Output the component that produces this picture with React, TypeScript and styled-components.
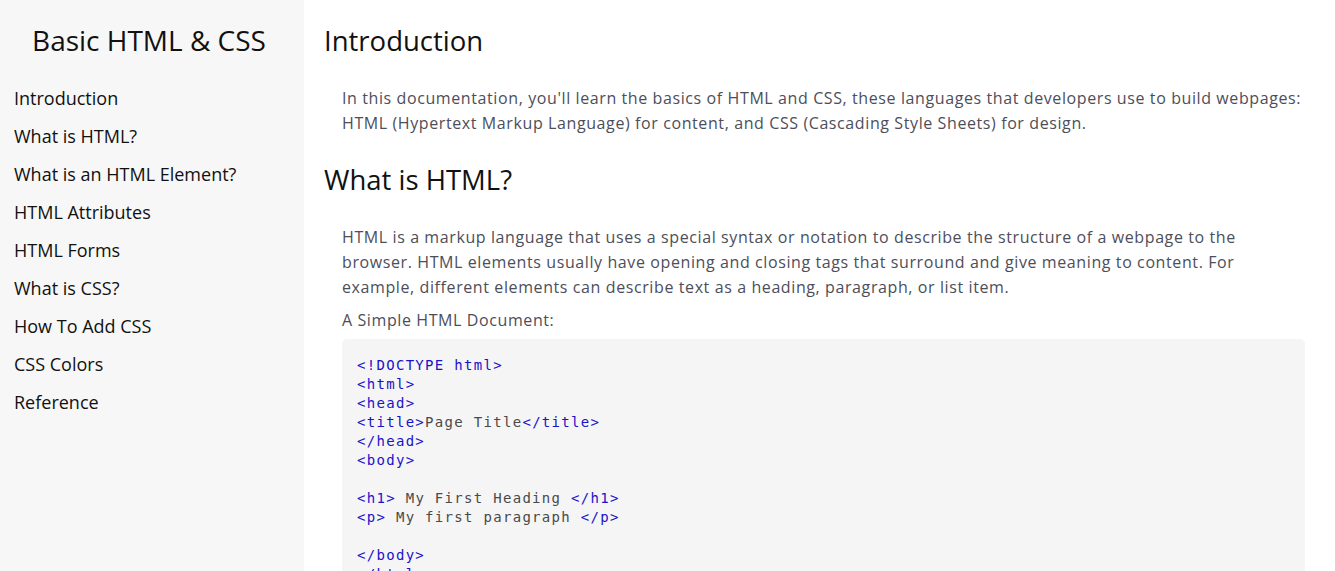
import React from "react";
import styled, { createGlobalStyle } from "styled-components";

const GlobalStyle = createGlobalStyle`
  html, body {
    margin: 0;
    padding: 0;
    background: #ffffff;
    font-family: "Open Sans", "Noto Sans", sans-serif;
    overflow: hidden;
  }
`;

const navItems = [
  "Introduction",
  "What is HTML?",
  "What is an HTML Element?",
  "HTML Attributes",
  "HTML Forms",
  "What is CSS?",
  "How To Add CSS",
  "CSS Colors",
  "Reference",
];

const codeLines: Array<Array<[string, boolean]>> = [
  [["<!DOCTYPE html>", true]],
  [["<html>", true]],
  [["<head>", true]],
  [["<title>", true], ["Page Title", false], ["</title>", true]],
  [["</head>", true]],
  [["<body>", true]],
  [],
  [["<h1>", true], [" My First Heading ", false], ["</h1>", true]],
  [["<p>", true], [" My first paragraph ", false], ["</p>", true]],
  [],
  [["</body>", true]],
  [["</html>", true]],
];

export default function App() {
  return (
    <>
      <GlobalStyle />
      <Page>
        <Sidebar>
          <SidebarTitle>Basic HTML &amp; CSS</SidebarTitle>
          <NavList>
            {navItems.map((item) => (
              <NavLink key={item} href="#">
                {item}
              </NavLink>
            ))}
          </NavList>
        </Sidebar>
        <Main>
          <Section>
            <SectionTitle>Introduction</SectionTitle>
            <Body>
              <Paragraph>
                In this documentation, you'll learn the basics of HTML and CSS, these
                languages that developers use to build webpages: HTML (Hypertext Markup
                Language) for content, and CSS (Cascading Style Sheets) for design.
              </Paragraph>
            </Body>
          </Section>
          <Section>
            <SectionTitle>What is HTML?</SectionTitle>
            <Body>
              <Paragraph>
                HTML is a markup language that uses a special syntax or notation to
                describe the structure of a webpage to the browser. HTML elements usually
                have opening and closing tags that surround and give meaning to content.
                For example, different elements can describe text as a heading,
                paragraph, or list item.
              </Paragraph>
              <Caption>A Simple HTML Document:</Caption>
              <CodeBlock>
                {codeLines.map((line, i) => (
                  <CodeLine key={i}>
                    {line.length === 0
                      ? "\u00a0"
                      : line.map(([text, tag], j) => (
                          <CodeToken key={j} $tag={tag}>
                            {text}
                          </CodeToken>
                        ))}
                  </CodeLine>
                ))}
              </CodeBlock>
            </Body>
          </Section>
        </Main>
      </Page>
    </>
  );
}

const Page = styled.div`
  display: flex;
  min-height: 571px;
`;

const Sidebar = styled.nav`
  width: 304px;
  flex-shrink: 0;
  background-color: #f7f7f7;
  padding: 20px 0 0 14px;
  box-sizing: border-box;
`;

const SidebarTitle = styled.h1`
  margin: 0 0 19px 0;
  padding-right: 20px;
  text-align: center;
  font-size: 28px;
  font-weight: 400;
  line-height: 40px;
  color: #111;
`;

const NavList = styled.div`
  display: flex;
  flex-direction: column;
`;

const NavLink = styled.a`
  display: block;
  font-size: 18px;
  line-height: 38px;
  color: #111;
  text-decoration: none;
`;

const Main = styled.main`
  flex: 1;
  padding: 19px 30px 0 20px;
  min-width: 0;
`;

const Section = styled.section`
  margin-bottom: 22px;
`;

const SectionTitle = styled.h2`
  margin: 0 0 23px 0;
  font-size: 27.5px;
  font-weight: 400;
  line-height: 44px;
  color: #111;
`;

const Body = styled.div`
  padding-left: 18px;
`;

const Paragraph = styled.p`
  margin: 0 0 8px 0;
  font-size: 16px;
  line-height: 25px;
  letter-spacing: 0.6px;
  color: #4d4e5a;
`;

const Caption = styled(Paragraph)`
  margin-bottom: 6px;
`;

const CodeBlock = styled.pre`
  margin: 0;
  padding: 17px 15px;
  background-color: #f5f5f5;
  border-radius: 5px;
  font-family: "DejaVu Sans Mono", "Liberation Mono", monospace;
  font-size: 14px;
  line-height: 19px;
  letter-spacing: 1.3px;
`;

const CodeLine = styled.div`
  white-space: pre;
`;

const CodeToken = styled.span<{ $tag: boolean }>`
  color: ${(p) => (p.$tag ? "#1a12c9" : "#4a4a4a")};
`;
